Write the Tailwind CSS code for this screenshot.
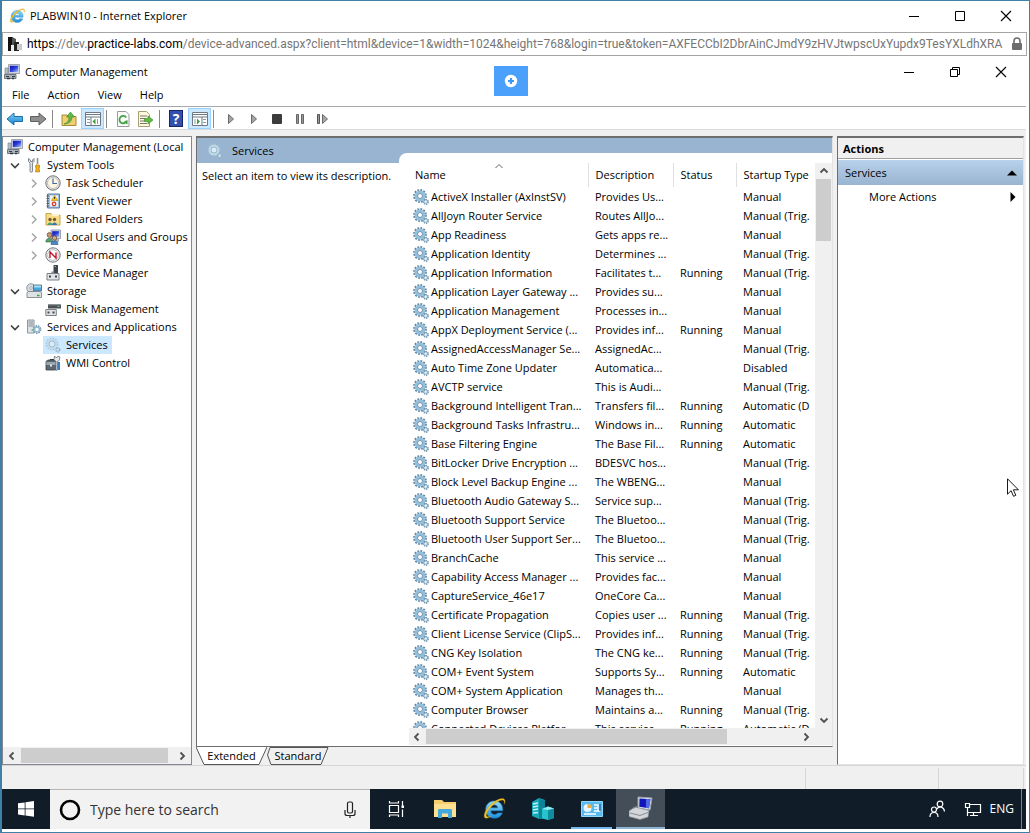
<!DOCTYPE html>
<html lang="en">
<head>
    <meta charset="UTF-8">
    <meta name="viewport" content="width=device-width, initial-scale=1.0">
    <title>PLABWIN10 - Internet Explorer</title>
    <script src="https://cdn.jsdelivr.net/npm/@tailwindcss/browser@4"></script>
</head>
<body class="bg-white font-['Open_Sans','Noto_Sans',sans-serif] text-[11px] leading-[18px] text-black">
    <!-- Icon set -->
    <svg class="absolute size-0" aria-hidden="true">
        <defs>
            <linearGradient id="scr" x1="0" y1="0" x2="1" y2="1"><stop offset="0" stop-color="#1010b0"/><stop offset=".5" stop-color="#2a3fd8"/><stop offset="1" stop-color="#b8cdf8"/></linearGradient>
            <linearGradient id="blueArrow" x1="0" y1="0" x2="0" y2="1"><stop offset="0" stop-color="#7fd0f8"/><stop offset="1" stop-color="#1380cf"/></linearGradient>
            <linearGradient id="ieb" x1="0" y1="0" x2="0" y2="1"><stop offset="0" stop-color="#8fdcfb"/><stop offset="1" stop-color="#1e8fdc"/></linearGradient>
        </defs>
        <symbol id="gear" viewBox="0 0 16 16">
            <circle cx="7" cy="7" r="5.8" fill="none" stroke="#5f86a3" stroke-width="2.2" stroke-dasharray="1.8 1.2"/>
            <circle cx="7" cy="7" r="4.1" fill="#fff" stroke="#93bfdb" stroke-width="2.8"/>
            <circle cx="7" cy="7" r="2.5" fill="#fff" stroke="#5a83a0" stroke-width=".9"/>
            <circle cx="12.8" cy="12.8" r="2.4" fill="#b5d3e6" stroke="#6d8ea6" stroke-width="1.4" stroke-dasharray="1.2 .8"/>
            <circle cx="12.8" cy="12.8" r=".8" fill="#fff"/>
        </symbol>
        <symbol id="gear-light" viewBox="0 0 16 16">
            <circle cx="7" cy="7" r="5.6" fill="none" stroke="#a9c3d6" stroke-width="1.6" stroke-dasharray="1.7 1.2"/>
            <circle cx="7" cy="7" r="4.2" fill="none" stroke="#c3dcec" stroke-width="2"/>
            <circle cx="7" cy="7" r="3" fill="#d9ebf7" stroke="#86abc4" stroke-width=".7"/>
            <circle cx="12.8" cy="12.8" r="2" fill="#c5dbe9" stroke="#8fabc0" stroke-width="1.3" stroke-dasharray="1.2 .8"/>
        </symbol>
        <symbol id="computer" viewBox="0 0 16 16">
            <path d="M4.5.5h11v9h-11z" fill="#d9dde2" stroke="#8b929a" stroke-width=".8"/>
            <path d="M5.8 1.7h8.5v6.4H5.800z" fill="url(#scr)"/>
            <path d="M1 4h3v6H1z" fill="#b8c0c8" stroke="#707880" stroke-width=".6"/>
            <path d="M8 9.500h4v1.500H8z" fill="#9aa2aa"/>
            <path d="M.5 10.500h11.500v4H.5z" fill="#aab2b9" stroke="#596168" stroke-width=".8"/>
            <path d="M2 12.500h3M8 12.500h3" stroke="#333b42"/>
            <path d="M3 14.500h3M8 14.500h2" stroke="#333b42" stroke-width="1.500"/>
        </symbol>
        <symbol id="tools" viewBox="0 0 16 16">
            <path d="M2.500 1.500v3l1.500 1.500v8a1 1 0 0 0 2.500 0V6L8 4.500v-3L6.500 3v1.500h-2V3z" fill="#dfe3e7" stroke="#767e86" stroke-width=".9"/>
            <path d="M11.500 1v6" stroke="#8a9199" stroke-width="1.600"/>
            <path d="M10 8h3.200l.5 2-.7 1 .6 3.800h-4L10.200 11l-.7-1z" fill="#f2b51d" stroke="#b27a08" stroke-width=".8"/>
        </symbol>
        <symbol id="clock" viewBox="0 0 16 16">
            <circle cx="8" cy="8" r="7.200" fill="#e8e8e8" stroke="#6f7377"/>
            <circle cx="8" cy="8" r="5.500" fill="#fdf5df" stroke="#b4b8bb" stroke-width=".8"/>
            <path d="M8 3.500V8.500h4" fill="none" stroke="#3f6aa5" stroke-width="1.200"/>
        </symbol>
        <symbol id="event" viewBox="0 0 16 16">
            <path d="M2.500 1h12v14h-12z" fill="#9fc0e3" stroke="#4d6f99" stroke-width=".9"/>
            <path d="M5 2.500h8v11H5z" fill="#eef4fb"/>
            <path d="M1.500 3h2.500M1.500 5.500h2.500M1.500 8h2.500M1.500 10.500h2.500M1.500 13h2.500" stroke="#5a5f66"/>
            <path d="M9.500 2.500l3.500 5H6.500z" fill="#f5c518" stroke="#b58b00" stroke-width=".6"/>
            <path d="M9.600 4v1.800" stroke="#222"/>
            <circle cx="9" cy="11" r="2.400" fill="#d9432f"/><path d="M8 10l2 2M10 10l-2 2" stroke="#fff" stroke-width=".8"/>
        </symbol>
        <symbol id="shared" viewBox="0 0 16 16">
            <path d="M1 2.500h5l1.500 1.500H15v10H1z" fill="#f7dc8a" stroke="#c49a3a" stroke-width=".9"/>
            <path d="M7 3h7v2H7z" fill="#fff3c9"/>
            <circle cx="5" cy="8.500" r="1.700" fill="#7a5a2c"/><path d="M2.500 14c0-3.500 5-3.500 5 0z" fill="#45a070"/>
            <circle cx="9.500" cy="8.500" r="1.700" fill="#7a5a2c"/><path d="M7 14c0-3.500 5-3.500 5 0z" fill="#2f78b8"/>
        </symbol>
        <symbol id="users" viewBox="0 0 16 16">
            <path d="M6 1h9.500v8.500H6z" fill="#d5dae0" stroke="#858d96" stroke-width=".8"/><path d="M7.200 2.200h7v5.800h-7z" fill="url(#scr)"/>
            <path d="M9 10h5v3H9z" fill="#a9b1b9"/>
            <circle cx="4.500" cy="6" r="2.400" fill="#c99a6a" stroke="#5d4630" stroke-width=".7"/><path d="M.8 13c0-5 7-5 7 0z" fill="#58a06f" stroke="#2e6644" stroke-width=".6"/>
            <circle cx="9.500" cy="9" r="2.200" fill="#d8ab7c" stroke="#5d4630" stroke-width=".7"/><path d="M6 15.500c0-5 7-5 7 0z" fill="#4d86c8" stroke="#2b5488" stroke-width=".6"/>
        </symbol>
        <symbol id="perf" viewBox="0 0 16 16">
            <circle cx="8" cy="8" r="7.200" fill="#efefef" stroke="#73777b"/>
            <circle cx="8" cy="8" r="5.300" fill="#fff" stroke="#a9adb1" stroke-width=".7"/>
            <path d="M5 11V5l6 6V5.500" fill="none" stroke="#c2182b" stroke-width="1.400"/>
        </symbol>
        <symbol id="device" viewBox="0 0 16 16">
            <path d="M8.500 0h4.500v9H8.500z" fill="#3f454b"/><path d="M9.500 1.500h1.500" stroke="#6fd36f"/>
            <path d="M2 8.500h12v6.500H2z" fill="#e2e4e6" stroke="#7b8187"/>
            <path d="M4 10.500h2v2H4zM10 10.500h2v2h-2z" fill="#40464c"/><path d="M6.500 6.500h2v2h-2z" fill="#80868c"/>
        </symbol>
        <symbol id="storage" viewBox="0 0 16 16">
            <circle cx="5" cy="5" r="4.300" fill="#d6dce2" stroke="#7c848c" stroke-width=".8"/><circle cx="5" cy="5" r="1.300" fill="#fff" stroke="#7c848c" stroke-width=".6"/>
            <path d="M7.500 2h8v6h-8z" fill="#4aa5dc" stroke="#57626c" stroke-width=".8"/><path d="M8 2.500h7v2H8z" fill="#a5dcf7"/>
            <path d="M1 9.500l1.500-1h11.500l1.500 1v5H1z" fill="#dfe2e5" stroke="#747b82" stroke-width=".8"/><path d="M11 12.500h2.500" stroke="#37a037" stroke-width="1.500"/>
        </symbol>
        <symbol id="disk" viewBox="0 0 16 16">
            <path d="M3 3h13v4.500H3z" fill="#4a5056"/><path d="M3 3h13v1.300H3z" fill="#8b9197"/><path d="M12.500 5.500h2" stroke="#5fd05f"/>
            <path d="M.8 8.500h10.500v6H.8z" fill="#e2e4e6" stroke="#7b8187"/><path d="M2.500 10.500h2v2h-2zM7.500 10.500h2v2h-2z" fill="#40464c"/>
        </symbol>
        <symbol id="server" viewBox="0 0 16 16">
            <path d="M1.500 1h6.500v13H1.500z" fill="#dde2e6" stroke="#858c93" stroke-width=".9"/>
            <path d="M2.500 3h4.500M2.500 5h4.500M2.500 7h4.500" stroke="#79828a" stroke-width=".9"/><path d="M5.500 11h1.500" stroke="#3ea63e"/>
            <circle cx="11" cy="10.500" r="3.600" fill="none" stroke="#6f92ab" stroke-width="1.600" stroke-dasharray="1.500 1"/><circle cx="11" cy="10.500" r="2.500" fill="#fff" stroke="#8fb8d2" stroke-width="1.600"/>
        </symbol>
        <symbol id="wmi" viewBox="0 0 16 16">
            <path d="M1 6.500l2-1.500h9v8.500l-1.500 1.500H1z" fill="#5b6771" stroke="#39424a" stroke-width=".8"/><path d="M1.300 7h9.500v3H1.300z" fill="#9aa7b1"/>
            <path d="M5 4.500h4" stroke="#333"/><path d="M5 9.500h2v2H5z" fill="#e5e8ea"/>
            <path d="M9.500 1l2 2 1.500-2 2 1-.8 3.500-1.700 1v8.500l-1.500.3V6.500L9 4.500z" fill="#e2e7eb" stroke="#59636b" stroke-width=".7"/>
            <path d="M13 7h2v8h-2z" fill="#3d7cc4"/>
        </symbol>
        <symbol id="ie" viewBox="0 0 24 24">
            <path d="M12.300 4.500c-4.600 0-8 3.400-8 8 0 4.700 3.300 8 8 8 3.500 0 6.300-1.800 7.400-4.900h-4.300c-.6.9-1.600 1.400-3 1.400-2 0-3.300-1.200-3.400-3.300h11.100c.5-5.400-2.800-9.200-7.800-9.200zm-3.200 6.400c.3-1.700 1.500-2.700 3.200-2.700s2.900 1 3.100 2.700z" fill="url(#ieb)" stroke="#1f7fc4" stroke-width=".5"/>
            <path d="M4.600 20.500c-3-.2-1.800-6 3-11.200C12.500 4 19.300.9 21.500 2.900c1 1 .8 2.700-.1 4.600.3-1.700.2-2.900-.6-3.400-1.900-1.300-7.400 1.600-11.700 6.200-4.500 4.700-5.600 9.100-2.200 8.900.7 0 1.500-.3 2.300-.7-1.600 1.400-3.300 2.100-4.600 2z" fill="#f3c22b" stroke="#c99512" stroke-width=".3"/>
        </symbol>
        <symbol id="left" viewBox="0 0 16 16"><path d="M9.500 4.500L6 8l3.500 3.500" fill="none" stroke="#505050" stroke-width="1.800"/></symbol>
        <symbol id="right" viewBox="0 0 16 16"><path d="M6.500 4.500L10 8l-3.500 3.500" fill="none" stroke="#505050" stroke-width="1.800"/></symbol>
        <symbol id="up" viewBox="0 0 16 16"><path d="M4.500 9.500L8 6l3.500 3.500" fill="none" stroke="#505050" stroke-width="1.800"/></symbol>
        <symbol id="down" viewBox="0 0 16 16"><path d="M4.500 6.500L8 10l3.500-3.500" fill="none" stroke="#505050" stroke-width="1.800"/></symbol>
        <symbol id="closed" viewBox="0 0 16 16"><path d="M6 4.500l4 4-4 4" fill="none" stroke="#a6a6a6" stroke-width="1.500"/></symbol>
        <symbol id="open" viewBox="0 0 16 16"><path d="M4 6.500l4 4 4-4" fill="none" stroke="#404040" stroke-width="1.600"/></symbol>
        <symbol id="min" viewBox="0 0 12 12"><path d="M1 6.500h10" stroke="#000"/></symbol>
        <symbol id="close" viewBox="0 0 12 12"><path d="M1 1l10 10M11 1L1 11" stroke="#000" stroke-width="1.100"/></symbol>
    </svg>

    <div class="relative flex h-screen flex-col overflow-hidden border-t border-r border-b border-l-2 border-[#3f7fa8]">
        <!-- Browser title bar -->
        <header class="flex h-[31px] shrink-0 items-center justify-between pr-[17px] pb-0.5 pl-1.5">
            <div class="flex items-center gap-1">
                <svg class="size-[18px]"><use href="#ie"/></svg>
                <h1>PLABWIN10 - Internet Explorer</h1>
            </div>
            <div class="flex gap-[34px]">
                <button aria-label="Minimize"><svg class="size-3"><use href="#min"/></svg></button>
                <button aria-label="Maximize"><svg class="size-3" viewBox="0 0 12 12"><path d="M1.500 1.500h9v9h-9z" fill="none" stroke="#000"/></svg></button>
                <button aria-label="Close"><svg class="size-3"><use href="#close"/></svg></button>
            </div>
        </header>

        <!-- Address bar -->
        <div class="mr-0.5 flex h-6 shrink-0 items-center border border-[#a5a5a5] pr-[3px] pl-1">
            <svg class="size-4 shrink-0" viewBox="0 0 16 16"><path d="M1 1h5v14H1z" fill="#111"/><path d="M5 1l4 2v12H5z" fill="#555"/><path d="M7 6h5v9H7z" fill="#222"/><path d="M10 8h5v6h-5z" fill="#c9c9c9"/><path d="M4 9h3v6H4z" fill="#eee"/></svg>
            <div role="textbox" aria-label="Address" contenteditable="true" class="ml-1 min-w-0 flex-1 overflow-hidden font-[Roboto,sans-serif] text-[12px] whitespace-nowrap text-[#767676]"><span class="text-black">https</span>://dev.<span class="text-black">practice-labs.com</span>/device-advanced.aspx?client=html&amp;device=1&amp;width=1024&amp;height=768&amp;login=true&amp;token=AXFECCbI2DbrAinCJmdY9zHVJtwpscUxYupdx9TesYXLdhXRA</div>
            <svg class="ml-1 h-3.5 w-3 shrink-0" viewBox="0 0 12 14"><path d="M3 7V4a3 3 0 0 1 6 0v3" fill="none" stroke="#6d6d6d" stroke-width="1.600"/><rect x="1" y="6" width="10" height="7" rx="1" fill="#6d6d6d"/></svg>
        </div>

        <!-- Remote desktop -->
        <div class="mr-[3px] mb-[3px] flex min-h-0 flex-1 flex-col">
            <div class="flex h-[30px] shrink-0 items-center justify-between pt-0.5 pr-[19px] pl-0.5">
                <div class="flex items-center gap-[5px]">
                    <svg class="size-4"><use href="#computer"/></svg>
                    <h2>Computer Management</h2>
                </div>
                <div class="flex gap-[34px]">
                    <button aria-label="Minimize window"><svg class="size-3"><use href="#min"/></svg></button>
                    <button aria-label="Restore window"><svg class="size-3" viewBox="0 0 12 12"><path d="M1.500 3.500h7v7h-7zM3.500 3.500v-2h7v7h-2" fill="none" stroke="#000"/></svg></button>
                    <button aria-label="Close window"><svg class="size-3"><use href="#close"/></svg></button>
                </div>
            </div>
            <nav class="flex h-5 shrink-0 items-center gap-[18px] pb-0.5 pl-2.5">
                <button>File</button>
                <button>Action</button>
                <button>View</button>
                <button>Help</button>
            </nav>

            <!-- Toolbar -->
            <div class="flex h-6 shrink-0 items-center border-y border-t-[#a8a8a8] border-b-[#dadada] pt-px pl-1">
                <button aria-label="Back"><svg class="h-4 w-[18px]" viewBox="0 0 18 16"><path d="M1 8l7-6v3.500h8.500v5H8V14z" fill="url(#blueArrow)" stroke="#1d6fa8"/></svg></button>
                <button aria-label="Forward" class="ml-[5px]"><svg class="h-4 w-[18px]" viewBox="0 0 18 16"><path d="M17 8l-7-6v3.500H1.500v5H10V14z" fill="#8f8f8f" stroke="#5f5f5f"/></svg></button>
                <span class="ml-[5px] h-[18px] w-px bg-[#8a8a8a]"></span>
                <button aria-label="Up one level" class="ml-2"><svg class="size-4" viewBox="0 0 16 16"><path d="M1 4h5l1.500 1.500H15v9H1z" fill="#f0cf6e" stroke="#a98b3b"/><path d="M3 13c4-1 5-4 5-7H5.500L9.500 1l4 5H11c0 4-3 7-8 7z" fill="#62b847" stroke="#38832a" stroke-width=".6"/></svg></button>
                <button aria-label="Show console tree" class="ml-1 flex h-[21px] w-[23px] items-center justify-center border border-[#99d1ff] bg-[#cce8ff]"><svg class="size-4" viewBox="0 0 16 16"><path d="M.5 1.500h15v13H.5z" fill="#fff" stroke="#6d7a85"/><path d="M1 3.500h14M1 6h14M6 6v8" stroke="#6d7a85"/><path d="M2 8.500h3M2 11.500h3M12.500 8v5" stroke="#8d99a3"/><path d="M10.500 7.500v6L7.500 10.500z" fill="#3c9d3c"/></svg></button>
                <span class="ml-0.5 h-[18px] w-px bg-[#8a8a8a]"></span>
                <button aria-label="Refresh" class="ml-2"><svg class="size-4" viewBox="0 0 16 16"><path d="M2.500.5h8.500l3 3v12H2.500z" fill="#fbfbfb" stroke="#9a9a9a"/><path d="M11.200 6.500a3.700 3.700 0 1 0 .4 3.500" fill="none" stroke="#3fa340" stroke-width="1.800"/><path d="M12.500 9v4.500L8.500 11z" fill="#3fa340"/></svg></button>
                <button aria-label="Export list" class="ml-1.5"><svg class="size-4" viewBox="0 0 16 16"><path d="M1.500.5h8l3 3v12h-11z" fill="#fdf8dc" stroke="#a69f74"/><path d="M3 5h7M3 7.500h5M3 10h5M3 12.500h7" stroke="#777"/><path d="M7.500 7.500H11V5l5 4-5 4v-2.500H7.500z" fill="#5dbb3f" stroke="#36852a" stroke-width=".6"/></svg></button>
                <span class="ml-1.5 h-[18px] w-px bg-[#8a8a8a]"></span>
                <button aria-label="Help topics" class="ml-[9px] h-[17px] w-[14px] border border-[#16246a] bg-[#3350ad] text-center text-[14px] leading-[15px] font-bold text-white">?</button>
                <button aria-label="Show action pane" class="ml-[5px] flex h-[21px] w-[23px] items-center justify-center border border-[#99d1ff] bg-[#cce8ff]"><svg class="size-4" viewBox="0 0 16 16"><path d="M.5 1.500h15v13H.5z" fill="#fff" stroke="#6d7a85"/><path d="M1 3.500h14M1 6h14M10 6v8" stroke="#6d7a85"/><path d="M11 8.500h3M11 11.500h3M3 8v5" stroke="#8d99a3"/><path d="M5 7.500v6l3-3z" fill="#3c9d3c"/></svg></button>
                <span class="ml-0.5 h-[18px] w-px bg-[#8a8a8a]"></span>
                <div class="ml-[9px] flex gap-[7px]">
                    <button aria-label="Start"><svg class="size-4" viewBox="0 0 16 16"><path d="M5.500 3.500v9l5-4.500z" fill="#a5a5a5" stroke="#6a6a6a"/></svg></button>
                    <button aria-label="Resume"><svg class="size-4" viewBox="0 0 16 16"><path d="M5.500 3.500v9l5-4.500z" fill="#a5a5a5" stroke="#6a6a6a"/></svg></button>
                    <button aria-label="Stop"><svg class="size-4" viewBox="0 0 16 16"><rect x="3" y="3" width="10" height="10" rx="1" fill="#3c3c3c"/></svg></button>
                    <button aria-label="Pause"><svg class="size-4" viewBox="0 0 16 16"><path d="M4.500 3.500h2v9h-2zM9.500 3.500h2v9h-2z" fill="#999" stroke="#666"/></svg></button>
                    <button aria-label="Restart"><svg class="size-4" viewBox="0 0 16 16"><path d="M2.500 3.500h2v9h-2z" fill="#999" stroke="#555"/><path d="M7.500 3.500v9l5-4.500z" fill="#a5a5a5" stroke="#6a6a6a"/></svg></button>
                </div>
            </div>

            <!-- Panes -->
            <div class="flex min-h-0 flex-1 gap-1 bg-[#f0f0f0] pt-1.5 pr-0.5">
                <!-- Console tree -->
                <aside class="flex w-[190px] shrink-0 flex-col border border-[#828790] bg-white">
                    <ul class="min-h-0 flex-1 overflow-hidden pt-px whitespace-nowrap">
                        <li class="flex h-[18px] items-center gap-[5px] pl-1"><svg class="size-4 shrink-0"><use href="#computer"/></svg>Computer Management (Local</li>
                        <li class="flex h-[18px] items-center pl-1"><svg class="mr-[3px] size-4 shrink-0"><use href="#open"/></svg><svg class="mr-[5px] size-4 shrink-0"><use href="#tools"/></svg>System Tools</li>
                        <li class="flex h-[18px] items-center pl-[23px]"><svg class="mr-[3px] size-4 shrink-0"><use href="#closed"/></svg><svg class="mr-[5px] size-4 shrink-0"><use href="#clock"/></svg>Task Scheduler</li>
                        <li class="flex h-[18px] items-center pl-[23px]"><svg class="mr-[3px] size-4 shrink-0"><use href="#closed"/></svg><svg class="mr-[5px] size-4 shrink-0"><use href="#event"/></svg>Event Viewer</li>
                        <li class="flex h-[18px] items-center pl-[23px]"><svg class="mr-[3px] size-4 shrink-0"><use href="#closed"/></svg><svg class="mr-[5px] size-4 shrink-0"><use href="#shared"/></svg>Shared Folders</li>
                        <li class="flex h-[18px] items-center pl-[23px]"><svg class="mr-[3px] size-4 shrink-0"><use href="#closed"/></svg><svg class="mr-[5px] size-4 shrink-0"><use href="#users"/></svg>Local Users and Groups</li>
                        <li class="flex h-[18px] items-center pl-[23px]"><svg class="mr-[3px] size-4 shrink-0"><use href="#closed"/></svg><svg class="mr-[5px] size-4 shrink-0"><use href="#perf"/></svg>Performance</li>
                        <li class="flex h-[18px] items-center pl-[42px]"><svg class="mr-[5px] size-4 shrink-0"><use href="#device"/></svg>Device Manager</li>
                        <li class="flex h-[18px] items-center pl-1"><svg class="mr-[3px] size-4 shrink-0"><use href="#open"/></svg><svg class="mr-[5px] size-4 shrink-0"><use href="#storage"/></svg>Storage</li>
                        <li class="flex h-[18px] items-center pl-[42px]"><svg class="mr-[5px] size-4 shrink-0"><use href="#disk"/></svg>Disk Management</li>
                        <li class="flex h-[18px] items-center pl-1"><svg class="mr-[3px] size-4 shrink-0"><use href="#open"/></svg><svg class="mr-[5px] size-4 shrink-0"><use href="#server"/></svg>Services and Applications</li>
                        <li class="flex h-[18px] pl-10"><span class="flex items-center bg-[#cce8ff] pr-1 pl-0.5"><svg class="mr-[5px] size-4 shrink-0"><use href="#gear-light"/></svg>Services</span></li>
                        <li class="flex h-[18px] items-center pl-[42px]"><svg class="mr-[5px] size-4 shrink-0"><use href="#wmi"/></svg>WMI Control</li>
                    </ul>
                    <div class="flex h-[17px] shrink-0 items-center bg-[#f0f0f0] pl-px">
                        <button aria-label="Scroll tree left"><svg class="size-4"><use href="#left"/></svg></button>
                        <div class="ml-px h-[15px] flex-1 bg-[#cdcdcd]"></div>
                        <button aria-label="Scroll tree right" class="mr-px ml-1.5"><svg class="size-4"><use href="#right"/></svg></button>
                    </div>
                </aside>

                <!-- Services pane -->
                <main class="flex min-w-0 flex-1 flex-col">
                    <div class="flex min-h-0 flex-1 border border-t-2 border-[#6e6e6e] border-r-[#e3e3e3] bg-white">
                        <section class="w-[202px] shrink-0">
                            <div class="flex h-[25px] items-center gap-[9px] bg-[#99b4d1] pl-2.5">
                                <svg class="size-4"><use href="#gear-light"/></svg>
                                <h3>Services</h3>
                            </div>
                            <p class="pt-1 pl-[5px] whitespace-nowrap">Select an item to view its description.</p>
                        </section>
                        <section class="flex min-w-0 flex-1 bg-[#99b4d1] pt-[15px]">
                            <div class="flex min-w-0 flex-1 flex-col rounded-tl-lg bg-white pt-2.5 pb-px pl-2.5">
                                <div class="flex min-h-0 flex-1">
                                    <div class="min-w-0 flex-1 overflow-hidden">
                                        <table class="w-full table-fixed border-collapse text-left whitespace-nowrap">
                                            <colgroup><col><col class="w-[85px]"><col class="w-[63px]"><col class="w-[79px]"></colgroup>
                                            <thead>
                                                <tr class="h-6">
                                                    <th class="relative border-r border-[#e0e0e0] pl-1.5 font-normal">Name<svg class="absolute top-0 left-[86px] h-1.5 w-2" viewBox="0 0 8 6"><path d="M.5 5L4 1.500 7.500 5" fill="none" stroke="#606060"/></svg></th>
                                                    <th class="border-r border-[#e0e0e0] pl-[7px] font-normal">Description</th>
                                                    <th class="border-r border-[#e0e0e0] pl-[7px] font-normal">Status</th>
                                                    <th class="pl-[7px] font-normal">Startup Type</th>
                                                </tr>
                                            </thead>
                                            <tbody id="serviceRows"></tbody>
                                        </table>
                                    </div>
                                    <div class="flex w-[17px] shrink-0 flex-col items-center bg-[#f0f0f0]">
                                        <button aria-label="Scroll list up"><svg class="size-4"><use href="#up"/></svg></button>
                                        <div class="h-[62px] w-[15px] bg-[#cdcdcd]"></div>
                                        <button aria-label="Scroll list down" class="mt-auto"><svg class="size-4"><use href="#down"/></svg></button>
                                    </div>
                                </div>
                                <div class="flex h-[17px] shrink-0 items-center bg-[#f0f0f0] pr-[18px]">
                                    <button aria-label="Scroll list left"><svg class="size-4"><use href="#left"/></svg></button>
                                    <div class="ml-px h-[15px] w-[301px] bg-[#cdcdcd]"></div>
                                    <button aria-label="Scroll list right" class="ml-auto"><svg class="size-4"><use href="#right"/></svg></button>
                                </div>
                            </div>
                        </section>
                    </div>
                    <div class="flex h-[18px] shrink-0">
                        <button class="relative h-[18px] w-[71px]">
                            <svg class="absolute inset-0 h-[18px] w-[71px]" viewBox="0 0 71 18"><path d="M0 0l8 17.500h55L71 0z" fill="#fff"/><path d="M0 0l8 17.500h55L71 0" fill="none" stroke="#555"/></svg>
                            <span class="relative">Extended</span>
                        </button>
                        <button class="relative h-[18px] w-[62px]">
                            <svg class="absolute inset-0 h-[18px] w-[62px]" viewBox="0 0 62 18"><path d="M3 .5L.5 8l3.500 9.500h50L61 .5z" fill="#f0f0f0" stroke="#555"/></svg>
                            <span class="relative">Standard</span>
                        </button>
                    </div>
                </main>

                <!-- Actions pane -->
                <aside class="flex w-[187px] shrink-0 flex-col border border-t-2 border-[#e3e3e3] border-t-[#6e6e6e] border-l-[#6e6e6e] bg-white">
                    <h3 class="h-[21px] border-b border-[#a0a0a0] bg-[#f0f0f0] pl-[5px] leading-[21px] font-bold">Actions</h3>
                    <div class="mt-px flex h-[25px] items-center justify-between bg-linear-to-b from-[#b9d1ea] to-[#99b4d1] pr-1.5 pl-[7px]">
                        <h4>Services</h4>
                        <svg class="h-1.5 w-2.5" viewBox="0 0 10 6"><path d="M0 5.500L5 .5l5 5z" fill="#000"/></svg>
                    </div>
                    <button class="flex h-6 items-center justify-between pr-[7px] pl-[31px]">More Actions
                        <svg class="h-2.5 w-1.5" viewBox="0 0 6 10"><path d="M.5 0v10l5-5z" fill="#000"/></svg>
                    </button>
                </aside>
            </div>

            <!-- Status bar -->
            <div class="flex h-6 shrink-0 justify-end border-t border-[#d5d5d5] bg-[#f0f0f0] pt-0.5 pr-0.5">
                <div class="w-[133px] border-l border-[#d5d5d5]"></div>
                <div class="w-[86px] border-x border-[#d5d5d5]"></div>
            </div>

            <!-- Taskbar -->
            <footer class="flex h-10 shrink-0 items-stretch bg-[#101d29]">
                <button aria-label="Start menu" class="flex w-12 items-center justify-center"><svg class="size-4" viewBox="0 0 16 16"><path d="M0 2.300l6.700-.9v6.100H0zM7.500 1.300L16 .1v7.400H7.500zM0 8.300h6.700v6.200L0 13.600zM7.500 8.300H16v7.500l-8.500-1.200z" fill="#fff"/></svg></button>
                <label class="flex w-80 items-center border-t border-[#b5b5b5] bg-[#f2f2f2] pr-3.5 pl-[9px]">
                    <svg class="size-[22px] shrink-0" viewBox="0 0 22 22"><circle cx="11" cy="11" r="9" fill="none" stroke="#000" stroke-width="2.600"/></svg>
                    <input type="text" aria-label="Search" placeholder="Type here to search" class="ml-[9px] min-w-0 flex-1 text-[14px] text-[#333] outline-none placeholder:text-[#333]">
                    <svg class="h-[18px] w-3 shrink-0" viewBox="0 0 12 18"><rect x="3.500" y="1" width="5" height="11" rx="1.500" fill="none" stroke="#222" stroke-width="1.200"/><path d="M1 9v3.500c0 1.500 1 2 2 2h6c1 0 2-.5 2-2V9M6 14.500V17" fill="none" stroke="#222" stroke-width="1.200"/></svg>
                </label>
                <div class="flex pl-px">
                    <button aria-label="Task view" class="flex w-[49px] items-center justify-center"><svg class="size-[18px]" viewBox="0 0 18 18"><path d="M2.500 5.500h9v7h-9zM2.500 1v2h9V1M2.500 17v-2h9v2M15.500 1v5M15.500 9.500V17" fill="none" stroke="#fff" stroke-width="1.200"/><path d="M14.500 5.500h2.500v2.500h-2.500z" fill="#fff"/></svg></button>
                    <button aria-label="File Explorer" class="flex w-[49px] items-center justify-center"><svg class="size-[22px]" viewBox="0 0 22 22"><path d="M0 2h8l2 2h12v15H0z" fill="#f5cf6b"/><path d="M0 6h22v13H0z" fill="#fde191"/><path d="M4 20v-7.500c0-1 .5-1.500 1.500-1.500h11c1 0 1.500.5 1.500 1.500V20h-4v-4.500H8V20z" fill="#41a9dd"/></svg></button>
                    <button aria-label="Internet Explorer" class="flex w-[49px] items-center justify-center"><svg class="size-[26px]"><use href="#ie"/></svg></button>
                    <button aria-label="Server Manager" class="flex w-[49px] items-center justify-center"><svg class="size-[22px]" viewBox="0 0 22 22"><path d="M0 4l7-4 6 2v18l-6 1-7-3z" fill="#1ba8b8"/><path d="M7 1l6 1.500V20l-6 1z" fill="#0e8296"/><path d="M1 6l5-1M1 9l5-1M1 12l5-1M1 15l5-.5" stroke="#bdf4f7" stroke-width="1.400"/><path d="M10 11l6-2.500 6 2V20l-6 2-6-1.500z" fill="#27c3cd"/><path d="M16 12l6-1.500V20l-6 2z" fill="#0f8c9e"/><path d="M10 11l6-2.500 6 2L16 12z" fill="#8cecf0"/></svg></button>
                    <button aria-label="Control panel" class="flex w-[49px] items-center justify-center bg-[linear-gradient(#76b9ed,#76b9ed)] bg-[length:41px_2px] bg-bottom bg-no-repeat"><svg class="h-4 w-[22px]" viewBox="0 0 22 16"><path d="M.5.5h21v15H.5z" fill="#58b9ee" stroke="#8ed6fa"/><circle cx="6.500" cy="7" r="4" fill="#e7f6ff"/><path d="M6.500 7V3a4 4 0 0 1 4 4z" fill="#f0a93b"/><path d="M13 4h3M17 3v7M13 7h3M13 10h6.500M3 13h12" stroke="#fff" stroke-width="1.400"/><path d="M19 3v7" stroke="#2376b5" stroke-width="1.500"/></svg></button>
                    <button aria-label="Computer Management window" class="flex w-[49px] items-center justify-center border-b-2 border-[#8fb4d4] bg-[#444e59]"><svg class="size-6" viewBox="0 0 24 24"><path d="M9 1l14 1-2 12-12-2z" fill="#dfe3e8" stroke="#9aa1a8"/><path d="M10.500 2.500l11 .8-1.600 9-9.600-1.600z" fill="#1016b8"/><path d="M17 3l4.500.3-1.600 9-3-.5z" fill="#5169e6"/><path d="M12 13l6 1-2 3-6-1z" fill="#a8afb6"/><path d="M0 15l6-4 14 3.500-1 6.500-8 2.500L0 20.500z" fill="#d3d7db" stroke="#8c9298" stroke-width=".7"/><path d="M1 17l10 2.500 8-3M4 12.500l4-2" fill="none" stroke="#868d94"/></svg></button>
                </div>
                <div class="ml-auto flex items-center pr-1 text-white">
                    <button aria-label="People"><svg class="size-[18px]" viewBox="0 0 18 18"><circle cx="6" cy="9.500" r="2.500" fill="none" stroke="#fff" stroke-width="1.200"/><path d="M2 17c0-6 8-6 8 0" fill="none" stroke="#fff" stroke-width="1.200"/><circle cx="12" cy="4" r="2.800" fill="none" stroke="#fff" stroke-width="1.200"/><path d="M9 9c2-3.500 7-2.500 7.500 2.500" fill="none" stroke="#fff" stroke-width="1.200"/></svg></button>
                    <button aria-label="Network" class="ml-[18px]"><svg class="size-[18px]" viewBox="0 0 18 18"><path d="M6 4.500h10.500v8H3.500V8M9.500 12.500v3M6 15.500h8M3.500 12v4" fill="none" stroke="#fff" stroke-width="1.200"/><path d="M1.500 3.500h4v4h-4z" fill="none" stroke="#fff" stroke-width="1.200"/></svg></button>
                    <button class="ml-2 text-[12px]">ENG</button>
                    <span class="ml-[7px] h-10 w-px bg-[#7a828a]"></span>
                </div>
            </footer>
        </div>

        <!-- Session toolbar handle -->
        <button aria-label="Open session toolbar" class="absolute top-[65px] left-[calc(50%-22px)] flex h-[30px] w-[34px] items-center justify-center bg-[#4aa0fa]"><svg class="size-3.5" viewBox="0 0 14 14"><circle cx="7" cy="7" r="6.200" fill="#fff"/><path d="M7 4v6M4 7h6" stroke="#3f97f5" stroke-width="2.200"/></svg></button>

        <!-- Pointer -->
        <svg class="pointer-events-none absolute top-[477px] right-2.5 h-[19px] w-3" viewBox="0 0 12 19"><path d="M.5.8v15.400l3.600-3.500 2.400 5.600 2.300-1-2.400-5.500h5z" fill="#fff" stroke="#000" stroke-width=".9"/></svg>
    </div>

    <script>
        const services = [
            ['ActiveX Installer (AxInstSV)', 'Provides Us...', '', 'Manual'],
            ['AllJoyn Router Service', 'Routes AllJo...', '', 'Manual (Trig.'],
            ['App Readiness', 'Gets apps re...', '', 'Manual'],
            ['Application Identity', 'Determines ...', '', 'Manual (Trig.'],
            ['Application Information', 'Facilitates t...', 'Running', 'Manual (Trig.'],
            ['Application Layer Gateway ...', 'Provides su...', '', 'Manual'],
            ['Application Management', 'Processes in...', '', 'Manual'],
            ['AppX Deployment Service (...', 'Provides inf...', 'Running', 'Manual'],
            ['AssignedAccessManager Se...', 'AssignedAc...', '', 'Manual (Trig.'],
            ['Auto Time Zone Updater', 'Automatica...', '', 'Disabled'],
            ['AVCTP service', 'This is Audi...', '', 'Manual (Trig.'],
            ['Background Intelligent Tran...', 'Transfers fil...', 'Running', 'Automatic (D'],
            ['Background Tasks Infrastru...', 'Windows in...', 'Running', 'Automatic'],
            ['Base Filtering Engine', 'The Base Fil...', 'Running', 'Automatic'],
            ['BitLocker Drive Encryption ...', 'BDESVC hos...', '', 'Manual (Trig.'],
            ['Block Level Backup Engine ...', 'The WBENG...', '', 'Manual'],
            ['Bluetooth Audio Gateway S...', 'Service sup...', '', 'Manual (Trig.'],
            ['Bluetooth Support Service', 'The Bluetoo...', '', 'Manual (Trig.'],
            ['Bluetooth User Support Ser...', 'The Bluetoo...', '', 'Manual (Trig.'],
            ['BranchCache', 'This service ...', '', 'Manual'],
            ['Capability Access Manager ...', 'Provides fac...', '', 'Manual'],
            ['CaptureService_46e17', 'OneCore Ca...', '', 'Manual'],
            ['Certificate Propagation', 'Copies user ...', 'Running', 'Manual (Trig.'],
            ['Client License Service (ClipS...', 'Provides inf...', 'Running', 'Manual (Trig.'],
            ['CNG Key Isolation', 'The CNG ke...', 'Running', 'Manual (Trig.'],
            ['COM+ Event System', 'Supports Sy...', 'Running', 'Automatic'],
            ['COM+ System Application', 'Manages th...', '', 'Manual'],
            ['Computer Browser', 'Maintains a...', 'Running', 'Manual (Trig.'],
            ['Connected Devices Platfor...', 'This service ...', 'Running', 'Automatic (D']
        ];

        document.getElementById('serviceRows').innerHTML = services.map(([name, description, status, startup]) => `
            <tr class="h-[19px]">
                <td class="p-0 pl-1"><span class="flex items-center gap-0.5"><svg class="size-4 shrink-0"><use href="#gear"/></svg>${name}</span></td>
                <td class="p-0 pl-[7px]">${description}</td>
                <td class="p-0 pl-[7px]">${status}</td>
                <td class="overflow-hidden p-0 pl-[7px]">${startup}</td>
            </tr>`).join('');
    </script>
</body>
</html>
